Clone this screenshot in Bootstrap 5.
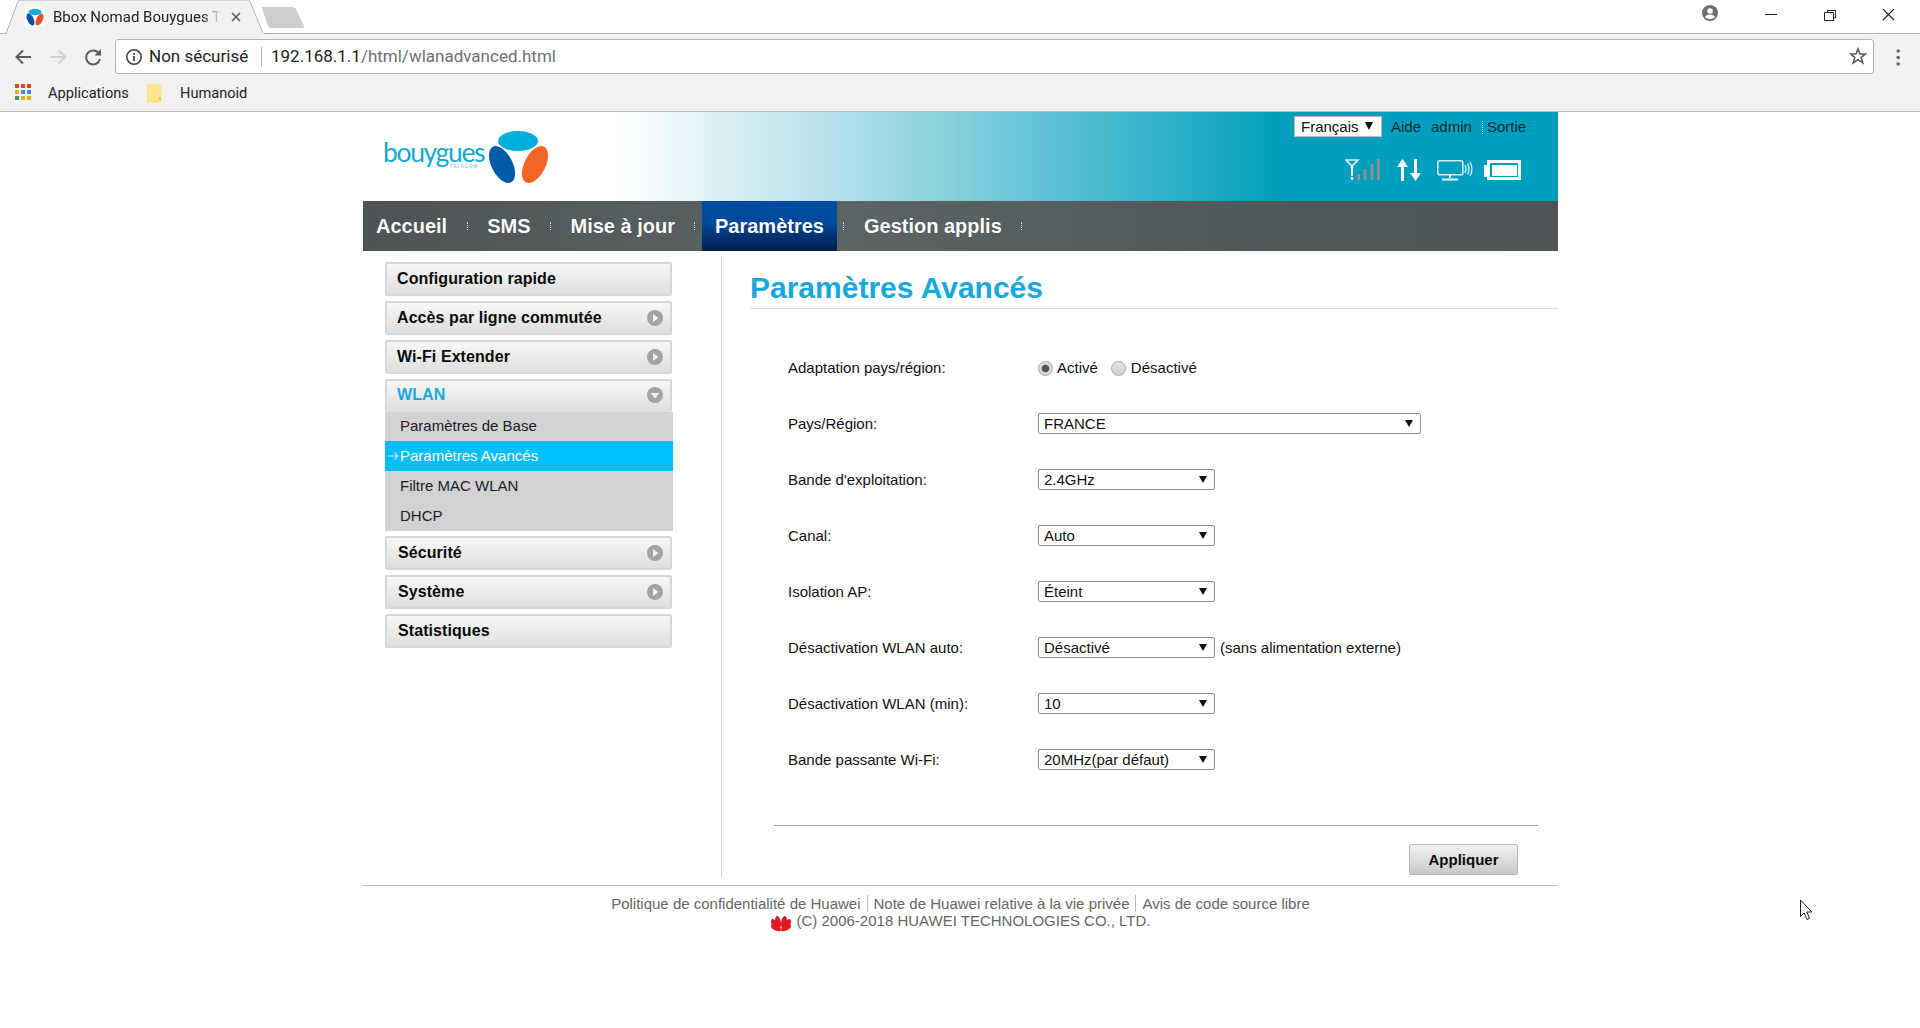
<!DOCTYPE html>
<html lang="fr"><head><meta charset="utf-8"><title>Bbox Nomad Bouygues Telecom</title>
<link href="https://cdn.jsdelivr.net/npm/bootstrap@5.3.0/dist/css/bootstrap.min.css" rel="stylesheet">
<style>
html,body{height:100%}
body{background:#fff;font-family:"Liberation Sans",Arial,sans-serif;font-size:15px;color:#111;overflow:hidden;position:relative}
.chr{font-family:Roboto,"Liberation Sans",sans-serif}
.tabstrip{height:34px;border-bottom:1px solid #b4b4b4;position:relative}
.tabshape{position:absolute;left:0;top:0;z-index:2}
.tabtitle{position:absolute;z-index:3;left:53px;top:7px;width:172px;white-space:nowrap;overflow:hidden;font-size:15px;line-height:20px;color:#222;-webkit-mask-image:linear-gradient(90deg,#000 150px,transparent 168px);mask-image:linear-gradient(90deg,#000 150px,transparent 168px)}
.tabico{position:absolute;z-index:3}
.toolbar{height:44px;background:#f2f2f2;padding:5px 0 5px 15px}
.addr{position:absolute;left:115px;right:46px;top:39px;height:35px;background:#fff;border:1px solid #b3b3b3;border-radius:3px;font-size:17px;line-height:33px;white-space:nowrap}
.addr-ns{position:absolute;left:33px;color:#222}
.addr-sep{position:absolute;left:145px;top:7px;height:20px;border-left:1px solid #bbb}
.addr-url{position:absolute;left:155px;color:#6f6f6f}
.addr-url b{font-weight:400;color:#222}
.bookbar{height:34px;background:#f2f2f2;border-bottom:1px solid #b9b9b9;font-size:14.6px;color:#222;position:relative}
.bookbar span{position:absolute;top:5px;line-height:20px}
.ab{position:absolute}
.wrap{width:1195px;margin-left:363px}
.hdr{height:89px;background:linear-gradient(90deg,#fff 0,#fff 21%,#a4dae6 43%,#009fbd 77%,#009fbd 100%);position:relative}
.logo-word{position:absolute;left:20px;top:28px;font-family:Lato,"Liberation Sans",sans-serif;font-weight:400;font-size:26.500px;line-height:24px;letter-spacing:-1.350px;color:#14a9d3}
.logo-tel{position:absolute;left:87px;top:52px;font-size:4.500px;font-weight:700;letter-spacing:.8px;color:#8fcfe2;line-height:6px}
.lang{position:absolute;left:931px;top:4px;width:88px;height:21px;background:#fff;border:1px solid #bbb;line-height:19px;padding-left:6px;color:#111}
.lang i{position:absolute;left:70px;top:5px;width:0;height:0;border-left:4px solid transparent;border-right:4px solid transparent;border-top:8px solid #111}
.toplink{position:absolute;top:5px;line-height:20px;color:#0a2a36}
.tsep{position:absolute;left:1119px;top:9px;height:13px;border-left:1px dotted #cfeef5}
.mainnav{height:50px;background:linear-gradient(90deg,#4e5456 0,#5c6466 40%,#50575a 75%,#4f5557 100%);align-items:stretch;gap:6.500px}
.mainnav .nav-link{padding:0 13px;font-size:20px;font-weight:700;line-height:50px;color:#fff;text-shadow:0 0 1px rgba(0,0,0,.4)}
.mainnav .nav-link.active{background:linear-gradient(180deg,#004da1 0,#00489a 45%,#001c46 100%)}
.nsep{width:1px;height:8px;align-self:center;border-left:1px dotted #d0d4d5}
.cols{height:627px}
.sidebar{width:358px;padding:11px 0 0 22px}
.mitem{display:flex;align-items:center;justify-content:space-between;height:34px;width:287px;margin-bottom:5px;border:2px solid #d6d6d6;border-radius:2px;background:linear-gradient(180deg,#f8f8f8,#dedede);padding:0 7px 0 11px;font-size:16px;font-weight:700;letter-spacing:.08px;color:#0a0a0a;text-decoration:none}
.mitem.upper{padding-left:10px}
.mitem.open{color:#1aa7dc;margin-bottom:0;height:33px;border-bottom:0;padding-bottom:3px}
.subm{width:288px;margin-bottom:5px;border-radius:0}
.subm .list-group-item{height:30px;padding:0 0 0 15px;line-height:30px;background:#d2d2d2;border:0;border-radius:0;font-size:15px;color:#1a1a28;position:relative}
.subm .list-group-item.subfirst{line-height:28px}
.subm .list-group-item.active{background:#00bfff;color:#fff}
.arrow-in{position:absolute;left:3px;top:10px}
.content{width:837px;border-left:1px solid #d2d2d2;margin-top:5px;padding-left:28px}
.ptitle{height:53px;margin:0;border-bottom:1px solid #ddd;font-size:30px;font-weight:700;line-height:50px;color:#1aa7dc;padding-top:7px}
.frm{padding:31px 0 0 38px}
.frow{height:56px;align-items:center}
.flabel{width:250px;margin:0;font-size:15px;color:#111}
.ctl{height:21px;width:177px;margin-top:-1px;padding:0 0 0 5px;font-family:inherit;font-size:15px;line-height:19px;color:#111;border:1px solid #8e8e8e;border-radius:2px;background-color:#fff;background-image:url("data:image/svg+xml,%3Csvg xmlns='http://www.w3.org/2000/svg' width='8' height='7'%3E%3Cpath d='M0 0h8L4 7z' fill='%23111'/%3E%3C/svg%3E");background-repeat:no-repeat;background-position:right 7px center;background-size:8px 7px;box-shadow:none}
.ctl.wide{width:383px}
.rad{width:15px;height:15px;margin:0 4px 0 0;border:1px solid #a9a9a9;background:linear-gradient(180deg,#e4e4e4,#d0d0d0);float:none}
.rad.rad2{margin-right:5px}
.rad:checked{background:radial-gradient(circle,#555 0,#555 3.400px,#d9d9d9 4.200px);border-color:#a9a9a9}
.radlab{margin-right:13px}
.extra{margin-left:5px}
.ftline{margin:37px 20px 0 -14px;border-top:1px solid #a5a5a5;height:19px}
.applybtn{width:109px;height:31px;margin-left:621px;padding:0;border:1px solid #b5b5b5;border-radius:2px;background:linear-gradient(180deg,#f2f2f2,#c9c9c9);font-size:15px;font-weight:700;color:#0a0a0a;line-height:29px}
.pfoot{border-top:1px solid #c1c1c1;margin-top:7px;padding-top:9px;text-align:center;color:#666;font-size:15px;line-height:17px}
.pfoot span{padding:0 6px}
.pfoot span+span{border-left:1px solid #bbb}
.copyline{margin-right:1px}
.hw{margin:3px 5px 0 0}
.cursor{position:absolute;left:1799px;top:899px;z-index:5}
</style></head>
<body>
<div class="chr">
  <div class="tabstrip">
    <svg class="tabshape" width="320" height="35"><path d="M6 33.500L18 1.500Q18.600 0 20 0H248Q249.500 0 250 1.500L262 31Q263 33.500 265 33.500" fill="#f2f2f2" stroke="#b4b4b4" stroke-width="1"/><path d="M7 33.500H264" stroke="#f2f2f2" stroke-width="2"/><path d="M262 8.500Q261 7 263 7H293Q295 7 296 9L304 26Q305 28 303 28H271Q269 28 268 26Z" fill="#cecece"/></svg>
    <svg class="tabico" style="left:25px;top:7px" width="20" height="20" viewBox="0 0 20 20"><rect width="20" height="20" fill="#fff"/><ellipse cx="10" cy="5" rx="6.500" ry="3.200" fill="#19aee0"/><ellipse cx="5.500" cy="12.500" rx="3.200" ry="6.500" fill="#0a4f9e" transform="rotate(-25 5.500 12.500)"/><ellipse cx="14.500" cy="12.500" rx="3.200" ry="6.500" fill="#e8502a" transform="rotate(25 14.500 12.500)"/></svg>
    <div class="tabtitle">Bbox Nomad Bouygues T</div>
    <svg class="tabico" style="left:231px;top:12px" width="10" height="10"><path d="M1 1L9 9M9 1L1 9" stroke="#5a5a5a" stroke-width="1.600"/></svg>
    <svg class="ab" style="left:1702px;top:5px" width="16" height="16" viewBox="0 0 16 16"><circle cx="8" cy="8" r="8" fill="#707070"/><circle cx="8" cy="6" r="2.800" fill="#fff"/><path d="M3 12.200Q4 9.600 8 9.600T13 12.200Q11 14 8 14T3 12.200Z" fill="#fff"/></svg>
    <svg class="ab" style="left:1765px;top:9px" width="130" height="13" fill="none" stroke="#222" stroke-width="1"><path d="M0 5.500H12"/><path d="M59.500 3.500H68.500V11.500H59.500Z M62.500 3.500V1.500H70.500V9H68.500"/><path d="M118 0L129 11M129 0L118 11" stroke-width="1.100"/></svg>
  </div>
  <div class="toolbar position-relative">
    <svg class="ab" style="left:15px;top:14px" width="90" height="18" viewBox="0 0 90 18" fill="none"><path d="M16 9H2M8 2.500L1.500 9L8 15.500" stroke="#5c5c5c" stroke-width="2"/><path d="M35 9H50M44 3L50.500 9L44 15" stroke="#cfcfcf" stroke-width="2"/><path d="M84 5.500A7 7 0 1 0 85 11" stroke="#5c5c5c" stroke-width="2"/><path d="M86 1V7.500H79.500Z" fill="#5c5c5c"/></svg>
    <svg class="ab" style="left:1896px;top:15px" width="5" height="17"><circle cx="2.200" cy="2" r="1.800" fill="#666"/><circle cx="2.200" cy="8.500" r="1.800" fill="#666"/><circle cx="2.200" cy="15" r="1.800" fill="#666"/></svg>
  </div>
  <div class="addr">
    <svg class="ab" style="left:9px;top:8px" width="18" height="18" viewBox="0 0 18 18"><circle cx="9" cy="9" r="7.200" fill="none" stroke="#444" stroke-width="1.600"/><rect x="8.100" y="8" width="1.800" height="5" fill="#444"/><rect x="8.100" y="5" width="1.800" height="1.800" fill="#444"/></svg>
    <span class="addr-ns">Non sécurisé</span><span class="addr-sep"></span>
    <span class="addr-url"><b>192.168.1.1</b>/html/wlanadvanced.html</span>
    <svg class="ab" style="right:6px;top:7px" width="18" height="18" viewBox="0 0 18 18"><path d="M9 2L11 7H16.400L12.200 10.400L13.800 15.800L9 12.600L4.200 15.800L5.800 10.400L1.600 7H7Z" fill="none" stroke="#5c5c5c" stroke-width="1.600"/></svg>
  </div>
  <div class="bookbar">
    <svg class="ab" style="left:15px;top:6px" width="16" height="16" viewBox="0 0 16 16"><rect x="0" y="0" width="4" height="4" fill="#e34133"/><rect x="6" y="0" width="4" height="4" fill="#e34133"/><rect x="12" y="0" width="4" height="4" fill="#e34133"/><rect x="0" y="6" width="4" height="4" fill="#f6a81c"/><rect x="6" y="6" width="4" height="4" fill="#3e8ee8"/><rect x="12" y="6" width="4" height="4" fill="#3e8ee8"/><rect x="0" y="12" width="4" height="4" fill="#31a24c"/><rect x="6" y="12" width="4" height="4" fill="#f6a81c"/><rect x="12" y="12" width="4" height="4" fill="#f6a81c"/></svg>
    <span style="left:48px">Applications</span>
    <svg class="ab" style="left:147px;top:6px" width="16" height="19" viewBox="0 0 16 19"><path d="M0 1.500Q0 0 1.500 0H11L14.500 1V17.500Q14.500 19 13 19H1.500Q0 19 0 17.500Z" fill="#fde48e"/><rect x="12" y="13" width="2" height="3" fill="#e8c25e"/></svg>
    <span style="left:180px">Humanoid</span>
  </div>
</div>
<div class="wrap">
  <header class="hdr">
    <div class="logo-word">bouygues</div><div class="logo-tel">TELECOM</div>
    <svg class="ab" style="left:123px;top:18px" width="76" height="60" viewBox="0 0 76 60"><ellipse cx="32" cy="11" rx="20" ry="10" fill="#00aed9"/><ellipse cx="16" cy="34.500" rx="10.500" ry="20" fill="#0059a9" transform="rotate(-27 16 34.500)"/><ellipse cx="49" cy="34.500" rx="10.500" ry="20" fill="#f26522" transform="rotate(27 49 34.500)"/></svg>
    <div class="lang">Français<i></i></div>
    <a class="toplink text-decoration-none" style="left:1028px">Aide</a>
    <a class="toplink text-decoration-none" style="left:1068px">admin</a>
    <span class="tsep"></span>
    <a class="toplink text-decoration-none" style="left:1124px">Sortie</a>
    <svg class="ab" style="left:982px;top:46px" width="130" height="26" viewBox="0 0 130 26" fill="none">
      <path d="M1 2H13L7 8Z" stroke="#d6f2f7" stroke-width="1.600"/><path d="M7 8V18" stroke="#fff" stroke-width="2"/><circle cx="7" cy="20.500" r="1.400" fill="#fff"/>
      <path d="M13.500 22V16M20 22V11M27 22V6M33.500 22V1" stroke="#8a9296" stroke-width="3"/>
      <path d="M57.500 23V7" stroke="#fff" stroke-width="3"/><path d="M52 9L57.500 1L63 9Z" fill="#fff"/>
      <path d="M70.500 1V17" stroke="#fff" stroke-width="3"/><path d="M65 15L70.500 23L76 15Z" fill="#fff"/>
      <rect x="92.800" y="2.800" width="25" height="14" rx="2" stroke="#d6f2f7" stroke-width="1.600"/><path d="M105 17V20M97 21.500H113" stroke="#e8f8fb" stroke-width="2"/><path d="M120 7Q122 11 120 15M122.500 5.500Q125.500 11 122.500 16.500M125 4Q129 11 125 18" stroke="#d6f2f7" stroke-width="1.300"/>
    </svg>
    <svg class="ab" style="left:1119px;top:46px" width="42" height="24" viewBox="0 0 42 24"><rect x="2" y="7" width="4" height="12" fill="#fff"/><rect x="6.500" y="3.500" width="31" height="17" fill="#009fbd" stroke="#fff" stroke-width="3"/><rect x="10" y="7" width="25" height="11" fill="#fff"/></svg>
  </header>
  <nav class="nav mainnav">
    <a class="nav-link" href="#">Accueil</a><span class="nsep"></span>
    <a class="nav-link" href="#">SMS</a><span class="nsep"></span>
    <a class="nav-link" href="#">Mise à jour</a><span class="nsep"></span>
    <a class="nav-link active" href="#">Paramètres</a><span class="nsep"></span>
    <a class="nav-link" href="#">Gestion applis</a><span class="nsep"></span>
  </nav>
  <div class="cols d-flex">
    <aside class="sidebar">
      <a class="mitem upper" href="#">Configuration rapide</a>
      <a class="mitem upper" href="#">Accès par ligne commutée<svg width="16" height="16" viewBox="0 0 16 16"><circle cx="8" cy="8" r="8" fill="#a3a3a3"/><path d="M6 4L11.500 8L6 12Z" fill="#f2f2f2"/></svg></a>
      <a class="mitem upper" href="#">Wi-Fi Extender<svg width="16" height="16" viewBox="0 0 16 16"><circle cx="8" cy="8" r="8" fill="#a3a3a3"/><path d="M6 4L11.500 8L6 12Z" fill="#f2f2f2"/></svg></a>
      <a class="mitem upper open" href="#">WLAN<svg width="16" height="16" viewBox="0 0 16 16"><circle cx="8" cy="8" r="8" fill="#a3a3a3"/><path d="M3.500 6H12.500L8 11.500Z" fill="#f2f2f2"/></svg></a>
      <div class="list-group subm">
        <a class="list-group-item subfirst" href="#">Paramètres de Base</a>
        <a class="list-group-item active" href="#"><svg class="arrow-in" width="11" height="10" viewBox="0 0 11 10" fill="none" stroke="#cdefff" stroke-width="1.100"><path d="M0 5H10M6.500 1.500L10 5L6.500 8.500"/></svg>Paramètres Avancés</a>
        <a class="list-group-item" href="#">Filtre MAC WLAN</a>
        <a class="list-group-item" href="#">DHCP</a>
      </div>
      <a class="mitem" href="#">Sécurité<svg width="16" height="16" viewBox="0 0 16 16"><circle cx="8" cy="8" r="8" fill="#a3a3a3"/><path d="M6 4L11.500 8L6 12Z" fill="#f2f2f2"/></svg></a>
      <a class="mitem" href="#">Système<svg width="16" height="16" viewBox="0 0 16 16"><circle cx="8" cy="8" r="8" fill="#a3a3a3"/><path d="M6 4L11.500 8L6 12Z" fill="#f2f2f2"/></svg></a>
      <a class="mitem" href="#">Statistiques</a>
    </aside>
    <main class="content">
      <h1 class="ptitle">Paramètres Avancés</h1>
      <form class="frm">
        <div class="d-flex frow"><label class="flabel">Adaptation pays/région:</label>
          <input class="form-check-input rad" type="radio" name="r" checked><span class="radlab">Activé</span>
          <input class="form-check-input rad rad2" type="radio" name="r"><span>Désactivé</span></div>
        <div class="d-flex frow"><label class="flabel">Pays/Région:</label><select class="form-select ctl wide"><option>FRANCE</option></select></div>
        <div class="d-flex frow"><label class="flabel">Bande d'exploitation:</label><select class="form-select ctl"><option>2.4GHz</option></select></div>
        <div class="d-flex frow"><label class="flabel">Canal:</label><select class="form-select ctl"><option>Auto</option></select></div>
        <div class="d-flex frow"><label class="flabel">Isolation AP:</label><select class="form-select ctl"><option>Éteint</option></select></div>
        <div class="d-flex frow"><label class="flabel">Désactivation WLAN auto:</label><select class="form-select ctl"><option>Désactivé</option></select><span class="extra">(sans alimentation externe)</span></div>
        <div class="d-flex frow"><label class="flabel">Désactivation WLAN (min):</label><select class="form-select ctl"><option>10</option></select></div>
        <div class="d-flex frow"><label class="flabel">Bande passante Wi-Fi:</label><select class="form-select ctl"><option>20MHz(par défaut)</option></select></div>
        <div class="ftline"></div>
        <div><button type="button" class="btn applybtn">Appliquer</button></div>
      </form>
    </main>
  </div>
  <footer class="pfoot">
    <div><span>Politique de confidentialité de Huawei</span><span>Note de Huawei relative à la vie privée</span><span>Avis de code source libre</span></div>
    <div class="d-flex justify-content-center align-items-start copyline"><svg class="hw" width="22" height="18" viewBox="0 0 22 18"><g fill="#de1a22"><ellipse cx="8" cy="7.500" rx="2.900" ry="6.500" transform="rotate(-8 8 7.500)"/><ellipse cx="14" cy="7.500" rx="2.900" ry="6.500" transform="rotate(8 14 7.500)"/><ellipse cx="4.800" cy="9.500" rx="3" ry="6" transform="rotate(-28 4.800 9.500)"/><ellipse cx="17.200" cy="9.500" rx="3" ry="6" transform="rotate(28 17.200 9.500)"/><ellipse cx="6" cy="13" rx="5.500" ry="2.500" transform="rotate(25 6 13)"/><ellipse cx="16" cy="13" rx="5.500" ry="2.500" transform="rotate(-25 16 13)"/></g></svg>(C) 2006-2018 HUAWEI TECHNOLOGIES CO., LTD.</div>
  </footer>
</div>
<svg class="cursor" width="14" height="22" viewBox="0 0 14 22"><path d="M1.500 1V17.500L5.200 14L8 20.500L10.500 19.300L7.800 13H12.800Z" fill="#fff" stroke="#222" stroke-width="1"/></svg>
<script src="https://cdn.jsdelivr.net/npm/bootstrap@5.3.0/dist/js/bootstrap.bundle.min.js"></script>
</body></html>
